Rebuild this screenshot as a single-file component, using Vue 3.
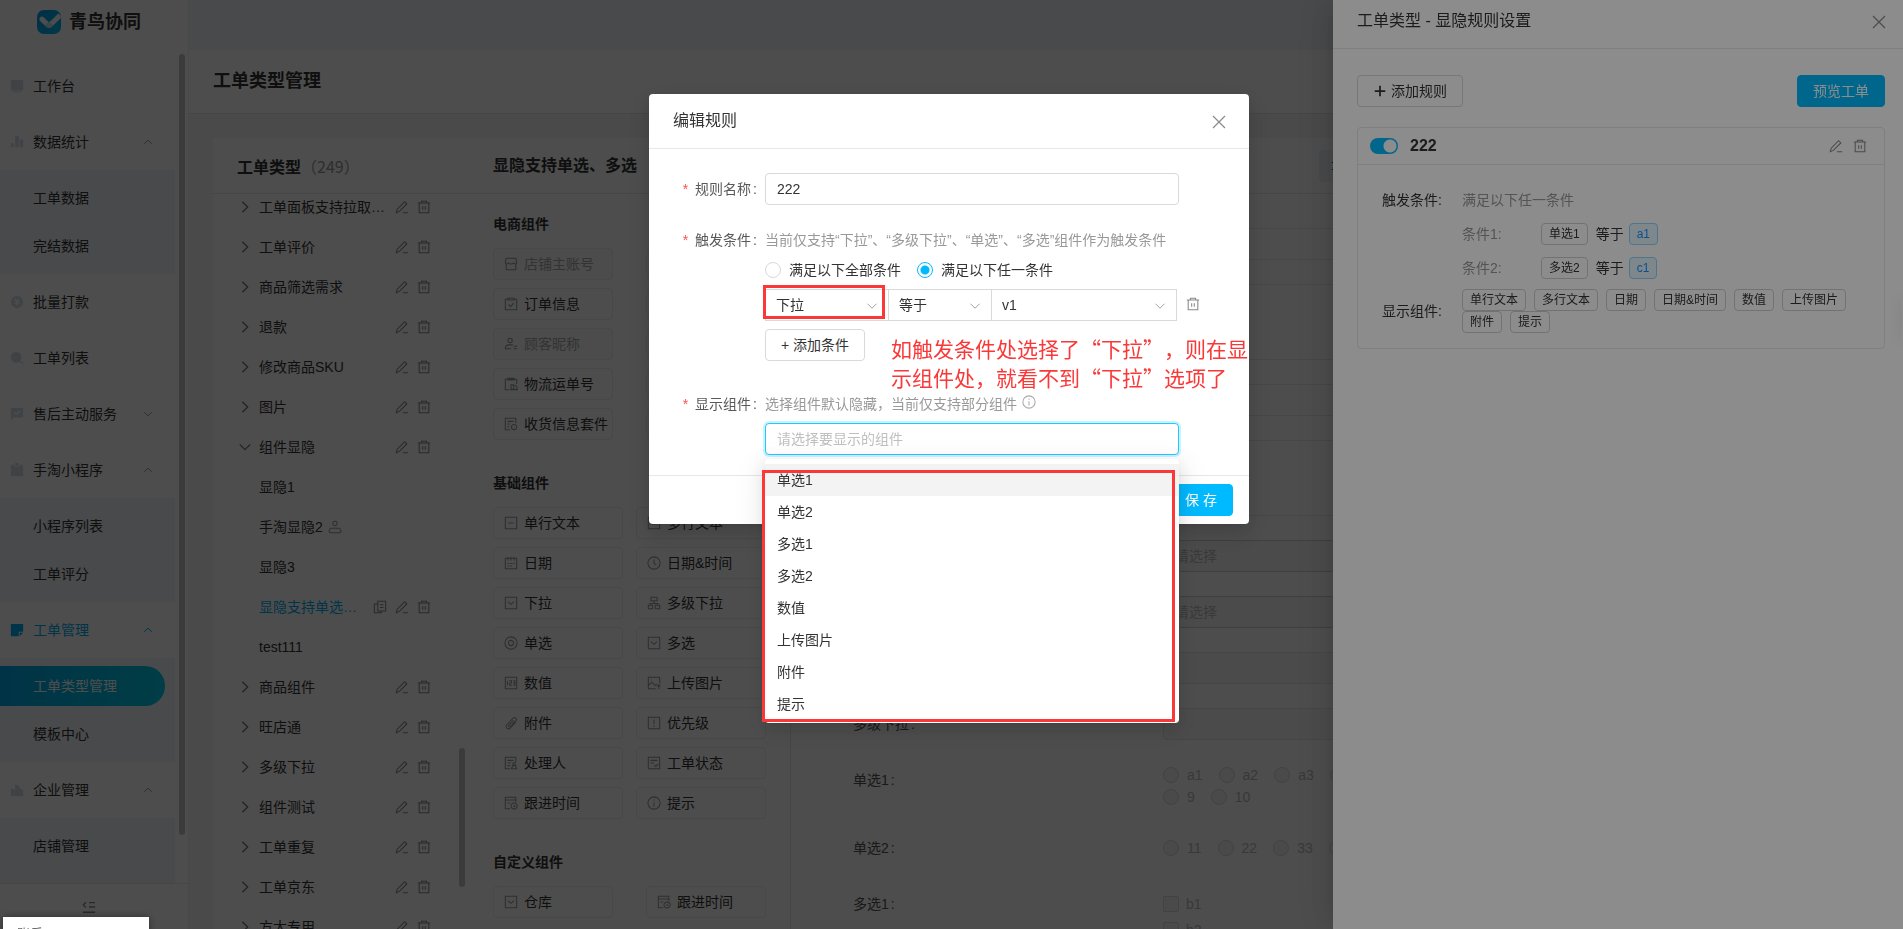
<script setup>
import { h, ref } from 'vue'

const icons = {
  monitor: { fill: true, d: 'M1 1h14v12H1z M3 14h10v1H3z' },
  bars: { fill: true, d: 'M1 9h3v5H1z M6 1h4v13H6z M11 5h4v9h-4z' },
  coin: { fill: true, d: 'M8 1a7 7 0 1 0 0 14a7 7 0 0 0 0-14z M5 4h1.4L8 6.6L9.600 4H11L9.200 7H11v1H8.700v1H11v1H8.700v2H7.300v-2H5V9h2.300V8H5V7h1.800z' },
  search: { fill: true, d: 'M7 1a6.200 6.200 0 1 0 0 12.400A6.200 6.200 0 0 0 7 1z M11 12l1-1l3.500 3.500l-1 1z' },
  chat: { fill: true, d: 'M1 1h14v11H4l-3 3z M4.500 6.500l1-1L7.500 7.500l3.500-3.500l1 1L7.500 9.500z' },
  clip: { fill: true, d: 'M1 2h4v2h6V2h4v13H1z M6 0h4v3H6z' },
  note: { fill: true, d: 'M1 1h14v9h-5v5H1z M11 11h4l-4 4z' },
  factory: { fill: true, d: 'M1 6l5 2V1l5 3v2l4 2v7H1z' },
  up: { d: 'M2 11l6-6l6 6' },
  down: { d: 'M2 5l6 6l6-6' },
  right: { d: 'M5 2l6 6l-6 6' },
  edit: { d: 'M1.500 14.500l1-4L11 2l2.500 2.500L5 13z M9 14.500h6' },
  trash: { d: 'M1 3.500h14 M5 3.500V1.500h6v2 M2.500 3.500v11h11v-11 M6.500 7v4 M9.500 7v4' },
  copy: { d: 'M5.500 1.500h9v11h-9z M5.500 4.500h-4v10h8v-2 M8 5.500h4 M8 8.500h4' },
  person: { d: 'M8 1.500a2.500 2.500 0 1 0 0 5a2.500 2.500 0 0 0 0-5z M3 14.500h10c3 0 2-5-1-5H4c-3 0-4 5-1 5z' },
  guest: { d: 'M7 1.500a2.500 2.500 0 1 0 0 5a2.500 2.500 0 0 0 0-5z M8 13.500H1.500c0-3 2-4.500 4.500-4.500h4 M11 10.500h4 M11 13.500h4' },
  shop: { d: 'M2.500 1.500h11l1 5c0 2-3 2-3.500 0c-.5 2-5.500 2-6 0c-.5 2-3.500 2-3.500 0z M2.500 8v6.500h11V8' },
  order: { d: 'M4 2.500H1.500v12h13v-12H12 M4.500 1.500h7v2h-7z M5 8.500l2.500 2.500L11 7' },
  truck: { d: 'M6 14.500H1.500v-12h13V8 M4.500 1.500h7v2h-7z M8 14V9h3v5z M11 10h3l1 2v2h-4 M7 14.500h9' },
  parcel: { d: 'M7 14.500H1.500v-13h12V7 M4 5h7 M4 8h3 M4 11h2 M11.500 8.500a3 3 0 1 0 0 6a3 3 0 0 0 0-6z M11.500 11v1' },
  line: { d: 'M1.500 1.500h13v13h-13z M5 8h6' },
  lines: { d: 'M1.500 1.500h13v13h-13z M4 6h5 M4 9h8' },
  calendar: { d: 'M1.500 2.500h13v12h-13z M4.500 1v4 M8 1v4 M11.500 1v4 M4 8.500h2 M7 8.500h2 M10 8.500h2 M4 11.500h2 M7 11.500h2' },
  clock: { d: 'M8 1a7 7 0 1 0 0 14a7 7 0 0 0 0-14z M8 4v4.500l2.500 2' },
  select: { d: 'M1.500 1.500h13v13h-13z M4.500 6.500l3.500 3l3.500-3' },
  tree: { d: 'M4.500 1.500h7v4h-7z M1.500 10.500h5v4h-5z M9.500 10.500h5v4h-5z M8 6v2.500 M3.500 10.500v-2h9v2' },
  target: { d: 'M8 1a7 7 0 1 0 0 14a7 7 0 0 0 0-14z M8 5a3 3 0 1 0 0 6a3 3 0 0 0 0-6z' },
  number: { d: 'M1.500 1.500h13v13h-13z M4 5.500v5 M6 5.500h2.500v2.500h-2v2.500h2.500 M10.500 5.500h2v5h-2 M10.500 8h2' },
  image: { d: 'M10 14.500H1.500v-13h13v7 M1.500 11l4-4l4 4l2-2 M4.500 4.500h1 M13.500 15v-5 M11.500 12l2-2l2 2' },
  pin: { d: 'M13.500 7l-6 6.500c-3 3-7-1-4-4l7-7c2-2 5 1 3 3l-6.500 6.500c-1 1-2.500-.5-1.500-1.500L11 5' },
  warn: { d: 'M1.500 1.500h13v13h-13z M8 4v5 M8 10.500v2' },
  handler: { d: 'M7 14.500H1.500v-13h12V7 M4 5h7 M4 8h4 M4 11h3 M11.500 7.500a1.500 1.500 0 1 0 0 3a1.500 1.500 0 0 0 0-3z M8.500 14.500l1.500-3.500h3l1.500 3.500z' },
  status: { d: 'M1.500 1.500h13v13h-13z M4 5h8 M4 8h4 M8 10.500l2 1.500l3-3' },
  follow: { d: 'M7 14.500H1.500v-13h12V7 M1.500 4.500h12 M4 8h3 M11.500 8a3.500 3.500 0 1 0 0 7a3.500 3.500 0 0 0 0-7z M11.500 10v2h1.500' },
  info: { d: 'M8 1a7 7 0 1 0 0 14a7 7 0 0 0 0-14z M8 4v1.500 M8 7v5' },
  close: { d: 'M2 2l12 12 M14 2L2 14' },
  fold: { d: 'M4.500 2.500L1.500 5.500l3 3 M8 3h7 M8 8h7 M1 14h14' },
  rows: { d: 'M1 4h14 M1 12h14' },
  plus: { d: 'M8 2v12 M2 8h12' },
}

const Icon = (props) => {
  const icon = icons[props.name]
  return h('svg', { class: 'icon', viewBox: '0 0 16 16', 'aria-hidden': 'true' }, [
    h('path', icon.fill
      ? { d: icon.d, fill: 'currentColor', 'fill-rule': 'evenodd' }
      : { d: icon.d, fill: 'none', stroke: 'currentColor', 'stroke-width': props.weight || 1.2 }),
  ])
}
Icon.props = ['name', 'weight']

const menu = [
  { label: '工作台', icon: 'monitor' },
  { label: '数据统计', icon: 'bars', arrow: 'up', children: ['工单数据', '完结数据'] },
  { label: '批量打款', icon: 'coin' },
  { label: '工单列表', icon: 'search' },
  { label: '售后主动服务', icon: 'chat', arrow: 'down' },
  { label: '手淘小程序', icon: 'clip', arrow: 'up', children: ['小程序列表', '工单评分'] },
  { label: '工单管理', icon: 'note', arrow: 'up', active: true, children: ['工单类型管理', '模板中心'] },
  { label: '企业管理', icon: 'factory', arrow: 'up', children: ['店铺管理'] },
]
const currentPage = '工单类型管理'

const group = (label, arrow = 'right') => ({ label, arrow, tools: ['edit', 'trash'] })
const tree = [
  group('工单面板支持拉取…'), group('工单评价'), group('商品筛选需求'), group('退款'),
  group('修改商品SKU'), group('图片'), group('组件显隐', 'down'),
  { label: '显隐1' },
  { label: '手淘显隐2', mark: 'person' },
  { label: '显隐3' },
  { label: '显隐支持单选…', active: true, tools: ['copy', 'edit', 'trash'] },
  { label: 'test111' },
  group('商品组件'), group('旺店通'), group('多级下拉'), group('组件测试'),
  group('工单重复'), group('工单京东'), group('方大专用'),
]

const palette = [
  {
    title: '电商组件', narrow: true, single: true, items: [
      ['shop', '店铺主账号', true], ['order', '订单信息'], ['guest', '顾客昵称', true],
      ['truck', '物流运单号'], ['parcel', '收货信息套件'],
    ],
  },
  {
    title: '基础组件', items: [
      ['line', '单行文本'], ['lines', '多行文本'], ['calendar', '日期'], ['clock', '日期&时间'],
      ['select', '下拉'], ['tree', '多级下拉'], ['target', '单选'], ['select', '多选'],
      ['number', '数值'], ['image', '上传图片'], ['pin', '附件'], ['warn', '优先级'],
      ['handler', '处理人'], ['status', '工单状态'], ['follow', '跟进时间'], ['info', '提示'],
    ],
  },
  { title: '自定义组件', narrow: true, items: [['select', '仓库'], ['follow', '跟进时间']] },
]

const fields = [
  { type: 'input' }, { type: 'area' }, { type: 'input' }, { type: 'area' },
  { type: 'select' }, { type: 'select' },
  { type: 'input', dim: true },
  { type: 'input', dim: true, label: '多级下拉' },
  { type: 'radio', label: '单选1', rows: [['a1', 'a2', 'a3', ''], ['9', '10']] },
  { type: 'radio', label: '单选2', rows: [['11', '22', '33', '']] },
  { type: 'check', label: '多选1', rows: [['b1'], ['b2']] },
]

const conditions = [['条件1:', '单选1', 'a1'], ['条件2:', '多选2', 'c1']]
const shown = ['单行文本', '多行文本', '日期', '日期&时间', '数值', '上传图片', '附件', '提示']
const options = ['单选1', '单选2', '多选1', '多选2', '数值', '上传图片', '附件', '提示']

const ruleName = ref('222')
const match = ref('any')
const enabled = ref(true)
</script>

<template>
  <div class="app">
    <aside class="sidebar">
      <div class="brand">
        <svg class="logo" viewBox="0 0 24 24" aria-hidden="true">
          <defs>
            <linearGradient id="brandFill" x1="0" y1="0" x2="1" y2="1">
              <stop offset="0" stop-color="#0098e8" /><stop offset="1" stop-color="#00c0ec" />
            </linearGradient>
          </defs>
          <rect width="24" height="24" rx="7" fill="url(#brandFill)" />
          <path d="M3 7.500q2-2 4 0l5 5L21.500 3.500Q24 5 24 8l-9.500 9q-2.500 2-5 0L3 11q-1.500-2 0-3.500z" fill="#fff" />
          <path d="M8 15.500l4-4l4 4l-1.500 1.500q-2.500 2-5 0z" fill="#c9e4f2" />
        </svg>
        <span>青鸟协同</span>
      </div>
      <nav class="menu">
        <template v-for="item in menu" :key="item.label">
          <a href="#" class="menu-item" :class="{ active: item.active }">
            <Icon :name="item.icon" class="menu-icon" />
            <span>{{ item.label }}</span>
            <Icon v-if="item.arrow" :name="item.arrow" weight="1.6" class="menu-arrow" />
          </a>
          <div v-if="item.children" class="submenu">
            <a v-for="child in item.children" :key="child" href="#" class="sub-item" :class="{ current: child === currentPage }">
              <span>{{ child }}</span>
            </a>
          </div>
        </template>
      </nav>
      <i class="menu-scroll"></i>
      <button class="fold" type="button" aria-label="收起菜单"><Icon name="fold" weight="1.5" /></button>
    </aside>

    <main class="main">
      <div class="topbar"></div>
      <h1 class="page-title">工单类型管理</h1>
      <div class="workspace">
        <section class="types">
          <h2 class="panel-title">工单类型<span class="count">（249）</span></h2>
          <div class="tree-wrap">
            <ul class="tree">
              <li v-for="node in tree" :key="node.label" :class="{ active: node.active }">
                <span class="caret"><Icon v-if="node.arrow" :name="node.arrow" weight="1.6" /></span>
                <span>{{ node.label }}</span>
                <Icon v-if="node.mark" :name="node.mark" class="mark" />
                <span class="tools"><Icon v-for="tool in node.tools" :key="tool" :name="tool" /></span>
              </li>
            </ul>
            <i class="tree-scroll"></i>
          </div>
        </section>

        <section class="designer">
          <header class="panel-title designer-title">
            <span>显隐支持单选、多选</span>
            <button class="ghost" type="button" aria-label="规则"><Icon name="rows" /></button>
          </header>
          <div class="designer-body">
            <div class="palette">
              <div v-for="part in palette" :key="part.title" class="part">
                <h3>{{ part.title }}</h3>
                <div class="grid" :class="{ narrow: part.narrow }">
                  <template v-for="item in part.items" :key="item[1]">
                    <button type="button" class="piece" :disabled="item[2]">
                      <Icon :name="item[0]" /><span>{{ item[1] }}</span>
                    </button>
                    <span v-if="part.single" class="piece"></span>
                  </template>
                </div>
              </div>
            </div>
            <form class="preview">
              <div v-for="(field, i) in fields" :key="i" class="field">
                <span class="field-label" :class="{ named: field.label }">{{ field.label }}</span>
                <input v-if="field.type === 'input'" class="box" :class="{ dim: field.dim }" disabled :aria-label="field.label || '输入'">
                <textarea v-else-if="field.type === 'area'" class="box tall" disabled aria-label="输入"></textarea>
                <select v-else-if="field.type === 'select'" class="box pick" disabled aria-label="请选择"><option>请选择</option></select>
                <div v-else class="choices" :class="field.type">
                  <div v-for="(row, r) in field.rows" :key="r" class="choice-row">
                    <label v-for="text in row" :key="text" class="choice">
                      <input :type="field.type === 'radio' ? 'radio' : 'checkbox'" disabled :aria-label="text || '选项'">
                      <span v-if="text">{{ text }}</span>
                    </label>
                  </div>
                </div>
              </div>
            </form>
          </div>
        </section>
      </div>
    </main>

    <div class="mask"></div>

    <aside class="drawer">
      <header class="drawer-head">
        <span>工单类型 - 显隐规则设置</span>
        <button type="button" class="close" aria-label="关闭"><Icon name="close" /></button>
      </header>
      <div class="drawer-body">
        <div class="actions">
          <button type="button" class="btn with-icon"><Icon name="plus" weight="2" />添加规则</button>
          <button type="button" class="btn primary">预览工单</button>
        </div>
        <article class="rule">
          <header class="rule-head">
            <label class="switch"><input v-model="enabled" type="checkbox" aria-label="启用规则"></label>
            <strong>222</strong>
            <span class="rule-tools"><Icon name="edit" /><Icon name="trash" /></span>
          </header>
          <div class="rule-body">
            <span class="rule-label">触发条件:</span>
            <div>
              <div class="muted">满足以下任一条件</div>
              <div v-for="c in conditions" :key="c[0]" class="condition">
                <span class="muted condition-name">{{ c[0] }}</span>
                <span class="tag">{{ c[1] }}</span>
                <span class="equal">等于</span>
                <span class="tag blue">{{ c[2] }}</span>
              </div>
            </div>
            <span class="rule-label">显示组件:</span>
            <div class="tags"><span v-for="tag in shown" :key="tag" class="tag">{{ tag }}</span></div>
          </div>
        </article>
      </div>
      <i class="side-handle"></i>
    </aside>

    <div class="mask modal-mask">
      <div class="modal" role="dialog" aria-label="编辑规则">
        <header class="modal-head">
          <span>编辑规则</span>
          <button type="button" class="close" aria-label="关闭"><Icon name="close" /></button>
        </header>
        <div class="modal-body">
          <label for="rule-name" class="form-label first">规则名称</label>
          <input id="rule-name" v-model="ruleName" class="text-input">

          <span class="form-label">触发条件</span>
          <div class="stack trigger">
            <div class="hint">当前仅支持“下拉”、“多级下拉”、“单选”、“多选”组件作为触发条件</div>
            <div class="radios">
              <label class="choice"><input v-model="match" type="radio" value="all"><span>满足以下全部条件</span></label>
              <label class="choice"><input v-model="match" type="radio" value="any"><span>满足以下任一条件</span></label>
            </div>
            <div class="triple">
              <div class="picker marked"><select aria-label="组件"><option>下拉</option></select><Icon name="down" /></div>
              <div class="picker"><select aria-label="关系"><option>等于</option></select><Icon name="down" /></div>
              <div class="picker"><select aria-label="值"><option>v1</option></select><Icon name="down" /></div>
              <button type="button" class="remove" aria-label="删除条件"><Icon name="trash" /></button>
            </div>
            <button type="button" class="btn add">+ 添加条件</button>
            <p class="note">如触发条件处选择了“下拉”，则在显示组件处，就看不到“下拉”选项了</p>
          </div>

          <label for="shown-parts" class="form-label">显示组件</label>
          <div class="stack">
            <div class="hint">选择组件默认隐藏，当前仅支持部分组件<Icon name="info" /></div>
            <div class="combo">
              <input id="shown-parts" class="text-input focused" placeholder="请选择要显示的组件">
              <ul class="dropdown" role="listbox">
                <li v-for="option in options" :key="option" role="option">{{ option }}</li>
              </ul>
            </div>
          </div>
        </div>
        <footer class="modal-foot"><button type="button" class="btn primary">保 存</button></footer>
      </div>
    </div>

    <div class="status">账乐</div>
  </div>
</template>

<style>
body { margin: 0; overflow: hidden; }
</style>

<style scoped>
.app, .app *, .app *::before, .app *::after { box-sizing: border-box; }
.app {
  display: flex;
  height: 100vh;
  overflow: hidden;
  font: 14px/22px "Liberation Sans", "Noto Sans CJK SC", sans-serif;
  color: #333;
  background: #f4f4f4;
}
ul, h1, h2, h3, p { margin: 0; padding: 0; list-style: none; }
button, input, select, textarea { font: inherit; color: inherit; }
button { padding: 0; border: 0; background: none; }
a { color: inherit; text-decoration: none; }
.icon { width: 14px; height: 14px; flex: none; display: block; }

.sidebar { position: relative; display: flex; flex-direction: column; width: 189px; flex: none; background: #fff; border-right: 1px solid #eee; }
.brand { display: flex; align-items: center; gap: 8px; height: 58px; flex: none; padding: 0 0 14px 37px; font-size: 18px; font-weight: 700; }
.logo { width: 24px; height: 24px; }
.menu { flex: 1; overflow: hidden; }
.menu-item { display: flex; align-items: center; height: 56px; padding: 0 35px 0 10px; gap: 9px; }
.menu-item.active { color: #00aef0; }
.menu-icon { color: #cfdde8; }
.active .menu-icon { color: #00aef0; }
.menu-arrow { width: 10px; height: 10px; margin-left: auto; color: #999; }
.active .menu-arrow { color: #00aef0; }
.submenu { width: 175px; padding: 4px 0; background: #eef3f8; }
.submenu:last-child { height: 104px; }
.sub-item { display: flex; align-items: center; height: 40px; margin: 4px 10px 8px 0; padding-left: 33px; }
.sub-item:last-child { margin-bottom: 4px; }
.sub-item.current { color: #fff; background: linear-gradient(90deg, #00a8e6, #00cbe8); border-radius: 0 20px 20px 0; }
.menu-scroll { position: absolute; right: 3px; top: 54px; bottom: 94px; width: 6px; border-radius: 3px; background: #c4c4c4; }
.fold { display: flex; justify-content: center; height: 46px; flex: none; padding: 16px 10px 0 0; border-top: 1px solid #e8e8e8; color: #888; }

.main { flex: 1; min-width: 0; display: flex; flex-direction: column; }
.topbar { height: 50px; flex: none; background: #f0f4f9; }
.page-title { height: 64px; flex: none; padding: 20px 24px; font-size: 18px; font-weight: 700; background: #fff; border-bottom: 1px solid #e4e4e4; }
.workspace { flex: 1; min-height: 0; display: flex; margin: 24px 24px 0; background: #fff; }
.types { width: 256px; flex: none; display: flex; flex-direction: column; }
.panel-title { height: 56px; flex: none; padding: 17px 24px; font-size: 16px; font-weight: 700; border-bottom: 1px solid #e8e8e8; }
.count { font-family: "Noto Sans CJK SC", sans-serif; font-weight: 400; color: #999; }
.tree-wrap { position: relative; flex: 1; overflow: hidden; }
.tree { margin-top: -7px; }
.tree li { display: flex; align-items: center; height: 40px; padding: 0 38px 0 25px; }
.tree li.active { color: #00aef0; }
.caret { width: 21px; color: #777; }
.mark { margin-left: 5px; color: #999; }
.tools { display: flex; gap: 8px; margin-left: auto; color: #888; }
.tree-scroll { position: absolute; right: 4px; top: 554px; width: 6px; height: 139px; border-radius: 3px; background: #c4c4c4; }

.designer { flex: 1; min-width: 0; display: flex; flex-direction: column; }
.designer-title { position: relative; }
.ghost { position: absolute; left: 850px; top: 12px; width: 88px; height: 32px; padding-left: 12px; border-radius: 4px; background: #ebf2f9; }
.designer-body { flex: 1; min-height: 0; display: flex; }
.palette { width: 322px; flex: none; overflow: hidden; padding: 19px 24px 0; border-right: 1px solid #e8e8e8; }
.part { margin-bottom: 32px; }
.part h3 { font-size: 14px; line-height: 22px; font-weight: 700; margin-bottom: 13px; }
.grid { display: grid; grid-template-columns: 130px 130px; justify-content: space-between; gap: 8px 0; }
.grid.narrow { grid-template-columns: 120px 120px; }
.piece { display: flex; align-items: center; gap: 6px; height: 32px; padding: 0 0 0 10px; border: 1px solid #ededed; border-radius: 4px; white-space: nowrap; text-align: left; }
.piece .icon { color: #999; }
.piece:disabled { color: #aaa; background: #fafafa; }
.preview { flex: 1; min-width: 0; padding: 34px 24px 0 62px; overflow: hidden; }
.field { display: grid; grid-template-columns: 310px 1fr; align-items: start; min-height: 32px; margin-bottom: 24px; }
.field-label { line-height: 32px; color: #555; }
.named::after { content: ":"; margin-left: 2px; }
.box { display: block; width: 100%; height: 32px; padding: 0 11px; border: 1px solid #e8e8e8; border-radius: 4px; background: #fff; appearance: none; resize: none; }
.box.tall { height: 76px; }
.box.dim { background: #f9f9f9; }
.box.pick { opacity: 1; color: #bfbfbf; border-color: #d0d0d0; background: #f7f7f7; }
.choice-row { display: flex; gap: 16px; min-height: 22px; }
.choice-row:only-child { min-height: 32px; }
.check { padding-top: 3px; }
.check .choice-row { min-height: 26px; }
.choice { display: flex; align-items: center; gap: 8px; }
.check .choice { gap: 7px; }
.preview .choice { color: #bbb; }
.choice input { appearance: none; width: 16px; height: 16px; flex: none; margin: 0; border: 1px solid #d9d9d9; border-radius: 50%; background: #fff; }
.preview .choice input { background: #f5f5f5; }
.check .choice input { border-radius: 2px; }
.choice input[type="radio"]:checked { border-color: #00baff; background: radial-gradient(circle, #00baff 4px, #fff 5px); }

.mask { position: fixed; inset: 0; background: rgba(0, 0, 0, 0.45); }
.drawer {
  position: fixed; top: 0; right: 0; bottom: 0; width: 570px; overflow: visible; background: #fff;
  box-shadow: -6px 0 16px -8px rgba(0, 0, 0, 0.12), -9px 0 28px rgba(0, 0, 0, 0.08), -12px 0 48px 16px rgba(0, 0, 0, 0.04);
}
.drawer-head { display: flex; justify-content: space-between; height: 49px; padding: 10px 16px 0 24px; font-size: 16px; border-bottom: 1px solid #e8e8e8; }
.drawer-head > span { line-height: 22px; }
.close { display: flex; align-items: center; height: 24px; color: #8a8a8a; }
.close .icon { width: 16px; height: 16px; }
.drawer-body { padding: 26px 18px 0 24px; }
.actions { display: flex; justify-content: space-between; }
.btn { height: 32px; padding: 0 15px; border: 1px solid #d9d9d9; border-radius: 4px; background: #fff; white-space: nowrap; }
.btn.primary { color: #fff; border-color: #00baff; background: #00baff; }
.with-icon { display: flex; align-items: center; gap: 4px; }
.rule { margin-top: 20px; border: 1px solid #e8e8e8; border-radius: 4px; }
.rule-head { display: flex; align-items: center; height: 37px; padding: 0 17px 0 12px; border-bottom: 1px solid #e8e8e8; }
.rule-head strong { margin-left: 12px; font-size: 16px; }
.switch { display: flex; }
.switch input { appearance: none; width: 28px; height: 16px; margin: 0; border-radius: 8px; background: radial-gradient(circle at 20px 8px, #fff 6px, transparent 7px) #00baff; }
.rule-tools { display: flex; gap: 10px; margin-left: auto; color: #888; }
.rule-body { display: grid; grid-template-columns: 80px 1fr; gap: 10px 0; padding: 24px 16px 15px 24px; }
.rule-label:nth-of-type(2) { align-self: center; }
.muted { color: #999; }
.condition { display: flex; align-items: center; margin-top: 12px; }
.condition-name { width: 79px; }
.equal { margin: 0 5px 0 8px; }
.tag { display: inline-block; height: 22px; padding: 0 7px; border: 1px solid #d0d0d0; border-radius: 4px; font-size: 12px; line-height: 20px; white-space: nowrap; }
.tag.blue { color: #1890ff; border-color: #91d5ff; background: #e6f7ff; }
.tags { display: flex; flex-wrap: wrap; column-gap: 8px; }
.side-handle { position: absolute; right: 0; top: 300px; width: 1px; height: 40px; box-shadow: 0 0 12px rgba(0, 0, 0, 0.4); }

.modal-mask { padding: 94px 5px 0 0; }
.modal {
  width: 600px; margin: 0 auto; background: #fff; border-radius: 4px;
  box-shadow: 0 3px 6px -4px rgba(0, 0, 0, 0.12), 0 6px 16px rgba(0, 0, 0, 0.1), 0 9px 28px 8px rgba(0, 0, 0, 0.08);
}
.modal-head { display: flex; justify-content: space-between; height: 55px; padding: 16px 22px 0 24px; font-size: 16px; border-bottom: 1px solid #e8e8e8; }
.modal-body { display: grid; grid-template-columns: 92px 414px; padding: 24px 0 20px 24px; }
.form-label { padding-right: 8px; text-align: right; color: #595959; white-space: nowrap; }
.form-label::before { content: "*"; margin-right: 7px; color: #ff4d4f; }
.form-label::after { content: ":"; margin-left: 2px; }
.form-label.first { line-height: 32px; margin-bottom: 24px; }
.text-input { width: 100%; height: 32px; padding: 0 11px; border: 1px solid #d9d9d9; border-radius: 4px; background: #fff; outline: none; }
.text-input.focused { display: block; border-color: #21c8ff; box-shadow: 0 0 0 2px rgba(0, 186, 255, 0.2); }
.text-input::placeholder { color: #bfbfbf; }
.stack { position: relative; display: flex; flex-direction: column; align-items: flex-start; gap: 8px; }
.trigger { margin-bottom: 32px; }
.hint { display: flex; gap: 5px; color: #999; white-space: nowrap; }
.hint .icon { margin-top: 2px; color: #aaa; }
.radios { display: flex; gap: 16px; }
.triple { display: flex; align-items: center; }
.picker { position: relative; width: 104px; height: 32px; margin-right: -1px; border: 1px solid #d9d9d9; }
.picker:first-child { width: 124px; }
.picker:nth-child(3) { width: 186px; }
.picker select { width: 100%; height: 30px; padding: 0 10px; border: 0; appearance: none; background: none; }
.picker .icon { position: absolute; right: 10px; top: 10px; width: 12px; height: 12px; color: #999; pointer-events: none; }
.marked::after { content: ""; position: absolute; left: -3px; top: -5px; width: 122px; height: 34px; border: 3px solid #fb3838; pointer-events: none; }
.remove { margin: 0 0 2px 10px; color: #888; }
.note { position: absolute; left: 126px; top: 105px; width: 360px; font: 21px/29px "Noto Sans CJK SC", sans-serif; text-spacing-trim: space-all; color: #fb3838; }
.combo { position: relative; width: 100%; }
.dropdown {
  position: absolute; left: 0; top: 36px; z-index: 2; width: 100%; padding: 5px 0 3px; background: #fff; border-radius: 4px;
  box-shadow: 0 3px 6px -4px rgba(0, 0, 0, 0.12), 0 6px 16px rgba(0, 0, 0, 0.1), 0 9px 28px 8px rgba(0, 0, 0, 0.06);
}
.dropdown li { height: 32px; padding: 5px 12px; }
.dropdown li:first-child { background: #f3f3f3; }
.dropdown::after { content: ""; position: absolute; left: -3px; top: 11px; width: 413px; bottom: 1px; border: 3px solid #fb3838; pointer-events: none; }
.modal-foot { display: flex; justify-content: flex-end; padding: 8px 16px; border-top: 1px solid #e8e8e8; }

.status { position: fixed; left: 3px; top: calc(100vh - 12px); width: 146px; height: 24px; padding: 6px 14px; font-size: 13px; color: #666; background: #fff; box-shadow: 0 0 8px rgba(0, 0, 0, 0.4); }
</style>
